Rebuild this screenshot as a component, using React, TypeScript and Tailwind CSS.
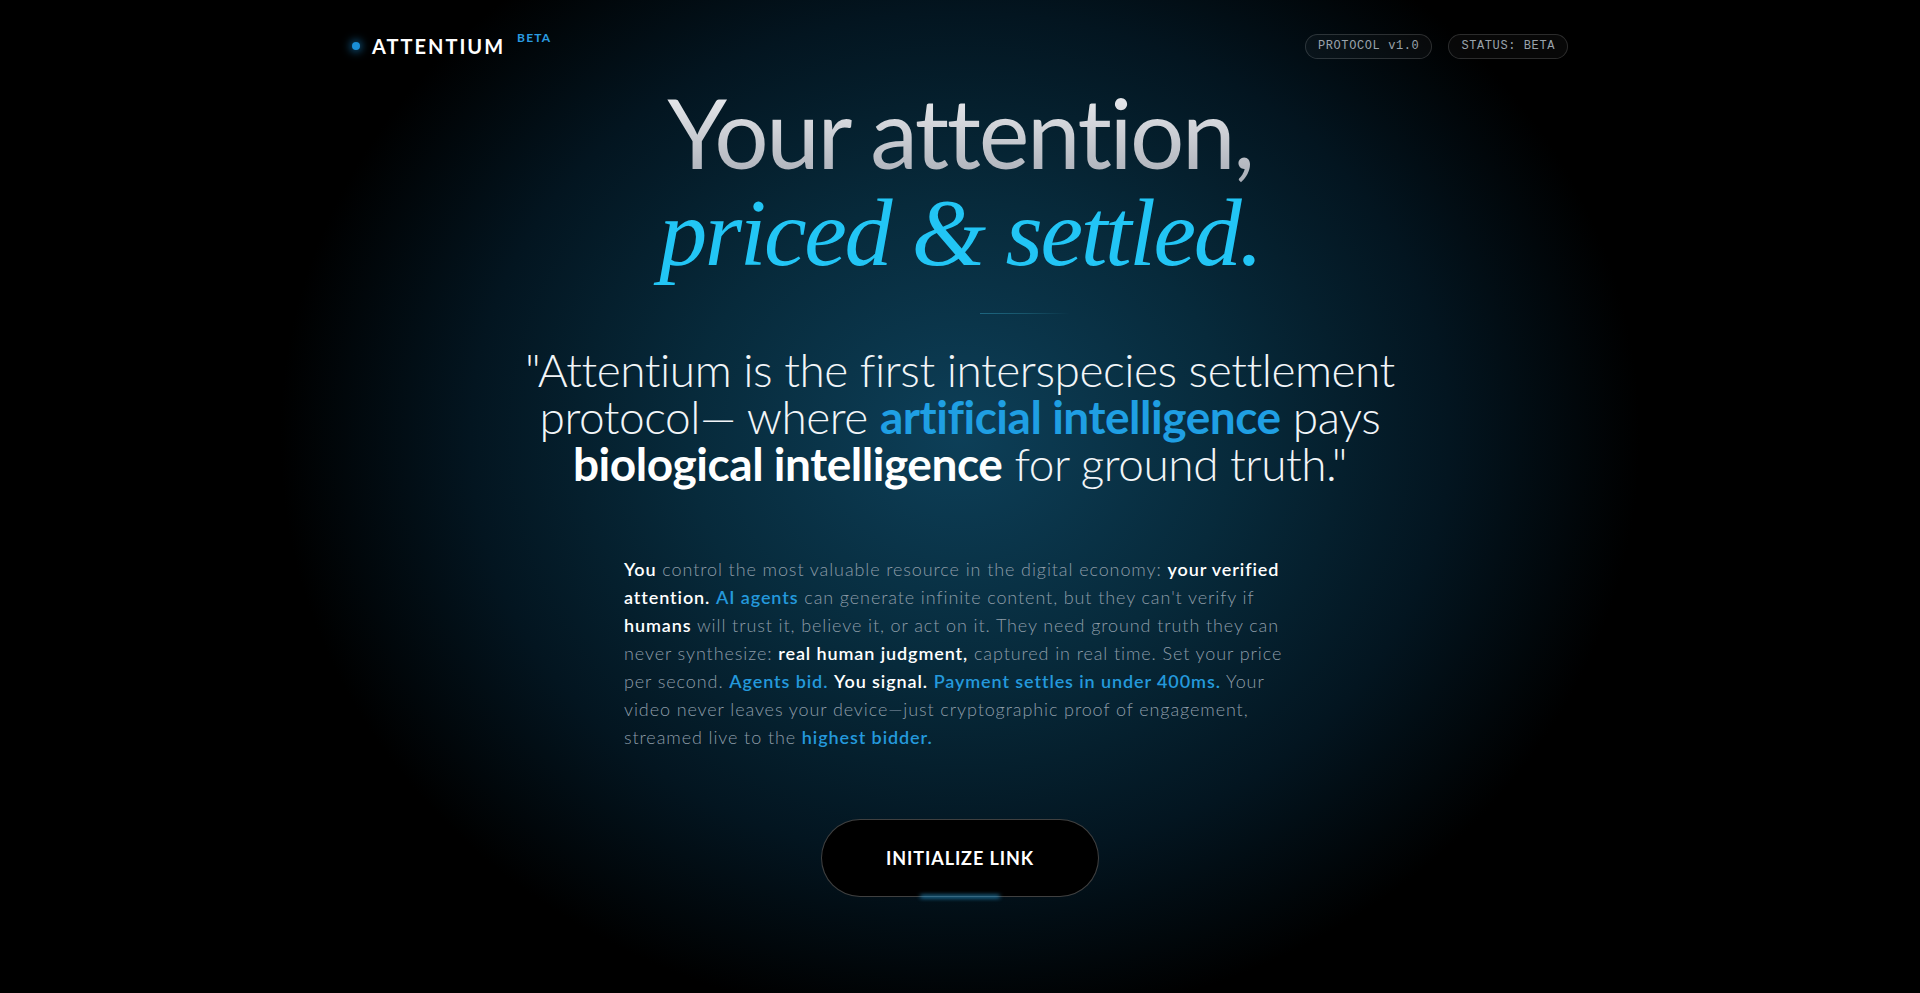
import React from 'react';

const Pill = ({ label }: { label: string }) => (
  <div className="h-[25px] flex items-center px-3 rounded-full border border-white/15 bg-white/[0.03] font-['Liberation_Mono','DejaVu_Sans_Mono',monospace] text-xs tracking-wider text-[#9aa3ab]">
    {label}
  </div>
);

const App: React.FC = () => {
  return (
    <div className="min-h-screen w-full bg-black bg-[radial-gradient(ellipse_680px_590px_at_50%_44%,#0d3f58_0%,#072a3b_40%,#031520_72%,#000_100%)] font-['Lato','Noto_Sans',sans-serif] text-white">
      <div className="flex flex-col items-center pb-24">
        {/* Header */}
        <header className="w-full max-w-7xl px-8 pt-8 flex items-center justify-between">
          <div className="flex items-center h-7">
            <span className="w-2 h-2 rounded-full bg-[#1a8fd6] shadow-[0_0_8px_2px_rgba(26,143,214,0.6)]" />
            <span className="ml-3 text-xl font-bold tracking-widest text-white">ATTENTIUM</span>
            <span className="ml-3 self-start text-xs leading-none font-bold tracking-widest text-[#2a9be0]">BETA</span>
          </div>
          <div className="flex items-center gap-4">
            <Pill label="PROTOCOL v1.0" />
            <Pill label="STATUS: BETA" />
          </div>
        </header>

        {/* Headline */}
        <h1 className="mt-6 text-center text-8xl leading-none tracking-tight font-normal">
          <span className="bg-gradient-to-b from-[#f7f7f9] to-[#a5aab3] bg-clip-text text-transparent">Your attention,</span>
          <br />
          <span className="font-['Liberation_Serif',serif] italic text-[#22c5f5]">priced &amp; settled.</span>
        </h1>

        <div className="mt-8 h-px w-[220px] relative">
          <div className="absolute left-[130px] top-0 h-px w-[90px] bg-gradient-to-r from-[#1d6680] via-[#17556b] to-transparent" />
        </div>

        {/* Quote */}
        <p className="mt-8 whitespace-nowrap text-center text-[46px] leading-[47px] tracking-[-0.01em] font-light text-[#f2f5f8]">
          "Attentium is the first interspecies settlement
          <br />
          protocol— where <span className="font-bold text-[#1f9fe3]">artificial intelligence</span> pays
          <br />
          <span className="font-bold text-white">biological intelligence</span> for ground truth."
        </p>

        {/* Body */}
        <p className="mt-[68px] w-[672px] whitespace-nowrap text-lg leading-7 tracking-wider font-light text-[#8d9ca8]">
          <span className="font-semibold text-white">You</span> control the most valuable resource in the digital economy:{' '}
          <span className="font-semibold text-white">your verified</span>
          <br />
          <span className="font-semibold text-white">attention.</span>{' '}
          <span className="font-semibold text-[#2499dc]">AI agents</span> can generate infinite content, but they can't verify if
          <br />
          <span className="font-semibold text-white">humans</span> will trust it, believe it, or act on it. They need ground truth they can
          <br />
          never synthesize: <span className="font-semibold text-white">real human judgment,</span> captured in real time. Set your price
          <br />
          per second. <span className="font-semibold text-[#2499dc]">Agents bid.</span>{' '}
          <span className="font-semibold text-white">You signal.</span>{' '}
          <span className="font-semibold text-[#2499dc]">Payment settles in under 400ms.</span> Your
          <br />
          video never leaves your device—just cryptographic proof of engagement,
          <br />
          streamed live to the <span className="font-semibold text-[#2499dc]">highest bidder.</span>
        </p>

        {/* CTA */}
        <button className="relative mt-[68px] px-16 py-6 rounded-full bg-black border border-white/25 text-lg font-bold tracking-wider text-white">
          INITIALIZE LINK
          <span className="absolute left-1/2 -bottom-[2px] -translate-x-1/2 h-[3px] w-20 rounded-full bg-[#2aa8e6]/80 blur-[2px]" />
        </button>
      </div>
    </div>
  );
};

export default App;
